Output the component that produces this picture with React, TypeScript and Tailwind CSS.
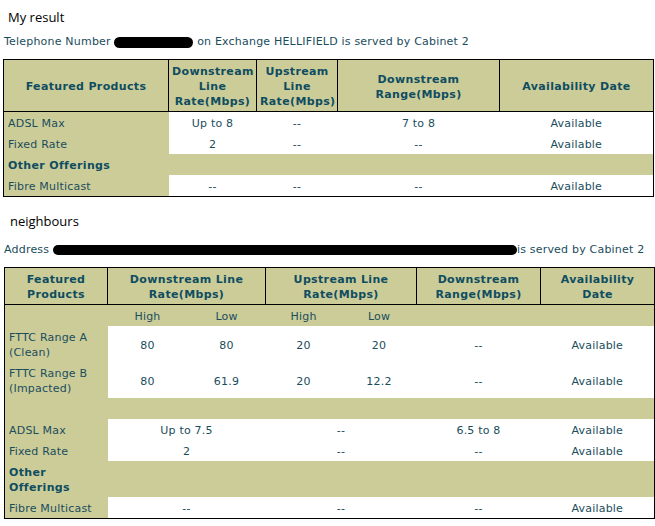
const KHAKI = "bg-[#cccc99]";

const th = `${KHAKI} border border-black font-bold text-center align-middle px-[3px] pt-[4px] pb-[2px] text-[#0f4d60] tracking-[0.35px]`;
const label = `${KHAKI} text-left px-[4px] pt-[4px] pb-[2px] align-middle`;
const cell = "bg-white text-center px-[3px] pt-[4px] pb-[2px] align-middle";
const sub = "text-center pt-[4px] pb-[2px]";

function Redact({ w, h = 12 }: { w: number; h?: number }) {
  return (
    <span
      className="inline-block bg-black rounded-full align-middle"
      style={{ width: w, height: h }}
    />
  );
}

function MyResult() {
  return (
    <table className="w-[650px] ml-[3px] table-fixed border-collapse border border-black">
      <colgroup>
        <col className="w-[165px]" />
        <col className="w-[88px]" />
        <col className="w-[81px]" />
        <col className="w-[162px]" />
        <col className="w-[154px]" />
      </colgroup>
      <thead>
        <tr className="h-[52px]">
          <th className={th}>Featured Products</th>
          <th className={th}>
            Downstream
            <br />
            Line
            <br />
            Rate(Mbps)
          </th>
          <th className={th}>
            Upstream
            <br />
            Line
            <br />
            Rate(Mbps)
          </th>
          <th className={th}>
            Downstream
            <br />
            Range(Mbps)
          </th>
          <th className={th}>Availability Date</th>
        </tr>
      </thead>
      <tbody>
        <tr>
          <td className={label}>ADSL Max</td>
          <td className={cell}>Up to 8</td>
          <td className={cell}>--</td>
          <td className={cell}>7 to 8</td>
          <td className={cell}>Available</td>
        </tr>
        <tr>
          <td className={label}>Fixed Rate</td>
          <td className={cell}>2</td>
          <td className={cell}>--</td>
          <td className={cell}>--</td>
          <td className={cell}>Available</td>
        </tr>
        <tr>
          <td className={`${label} font-bold text-[#0f4d60] tracking-[0.35px]`} colSpan={5}>
            Other Offerings
          </td>
        </tr>
        <tr>
          <td className={label}>Fibre Multicast</td>
          <td className={cell}>--</td>
          <td className={cell}>--</td>
          <td className={cell}>--</td>
          <td className={cell}>Available</td>
        </tr>
      </tbody>
    </table>
  );
}

function Neighbours() {
  return (
    <table className="w-[650px] ml-[4px] table-fixed border-collapse border border-black">
      <colgroup>
        <col className="w-[103px]" />
        <col className="w-[80px]" />
        <col className="w-[78px]" />
        <col className="w-[76px]" />
        <col className="w-[75px]" />
        <col className="w-[124px]" />
        <col className="w-[114px]" />
      </colgroup>
      <thead>
        <tr className="h-[37px]">
          <th className={th}>
            Featured
            <br />
            Products
          </th>
          <th className={th} colSpan={2}>
            Downstream Line
            <br />
            Rate(Mbps)
          </th>
          <th className={th} colSpan={2}>
            Upstream Line
            <br />
            Rate(Mbps)
          </th>
          <th className={th}>
            Downstream
            <br />
            Range(Mbps)
          </th>
          <th className={th}>
            Availability
            <br />
            Date
          </th>
        </tr>
      </thead>
      <tbody>
        <tr className={KHAKI}>
          <td className={sub} />
          <td className={sub}>High</td>
          <td className={sub}>Low</td>
          <td className={sub}>High</td>
          <td className={sub}>Low</td>
          <td className={sub} />
          <td className={sub} />
        </tr>
        <tr>
          <td className={label}>
            FTTC Range A
            <br />
            (Clean)
          </td>
          <td className={cell}>80</td>
          <td className={cell}>80</td>
          <td className={cell}>20</td>
          <td className={cell}>20</td>
          <td className={cell}>--</td>
          <td className={cell}>Available</td>
        </tr>
        <tr>
          <td className={label}>
            FTTC Range B
            <br />
            (Impacted)
          </td>
          <td className={cell}>80</td>
          <td className={cell}>61.9</td>
          <td className={cell}>20</td>
          <td className={cell}>12.2</td>
          <td className={cell}>--</td>
          <td className={cell}>Available</td>
        </tr>
        <tr>
          <td className={label} colSpan={7}>
            &nbsp;
          </td>
        </tr>
        <tr>
          <td className={label}>ADSL Max</td>
          <td className={cell} colSpan={2}>
            Up to 7.5
          </td>
          <td className={cell} colSpan={2}>
            --
          </td>
          <td className={cell}>6.5 to 8</td>
          <td className={cell}>Available</td>
        </tr>
        <tr>
          <td className={label}>Fixed Rate</td>
          <td className={cell} colSpan={2}>
            2
          </td>
          <td className={cell} colSpan={2}>
            --
          </td>
          <td className={cell}>--</td>
          <td className={cell}>Available</td>
        </tr>
        <tr>
          <td className={`${label} font-bold text-[#0f4d60] tracking-[0.35px]`} colSpan={7}>
            Other
            <br />
            Offerings
          </td>
        </tr>
        <tr>
          <td className={label}>Fibre Multicast</td>
          <td className={cell} colSpan={2}>
            --
          </td>
          <td className={cell} colSpan={2}>
            --
          </td>
          <td className={cell}>--</td>
          <td className={cell}>Available</td>
        </tr>
      </tbody>
    </table>
  );
}

export default function App() {
  return (
    <div className="w-[655px] h-[526px] bg-white font-['DejaVu_Sans',Verdana,sans-serif] text-[11px] leading-[15px] tracking-[0.2px] text-[#1a4d5c]">
      <div className="pt-[9px] pl-[8px] h-[34px] font-['Open_Sans',sans-serif] text-[13px] leading-[17px] tracking-normal text-black">
        My result
      </div>
      <div className="pl-[4px] h-[15px] whitespace-nowrap">
        Telephone Number <Redact w={79} h={11} /> on Exchange HELLIFIELD is served by Cabinet 2
      </div>
      <div className="mt-[10px]">
        <MyResult />
      </div>
      <div className="mt-[16px] pl-[10px] h-[17px] font-['Open_Sans',sans-serif] text-[13px] leading-[17px] tracking-normal text-black">
        neighbours
      </div>
      <div className="mt-[12px] pl-[4px] h-[15px] whitespace-nowrap">
        Address <Redact w={464} h={10} />
        is served by Cabinet 2
      </div>
      <div className="mt-[10px]">
        <Neighbours />
      </div>
    </div>
  );
}
